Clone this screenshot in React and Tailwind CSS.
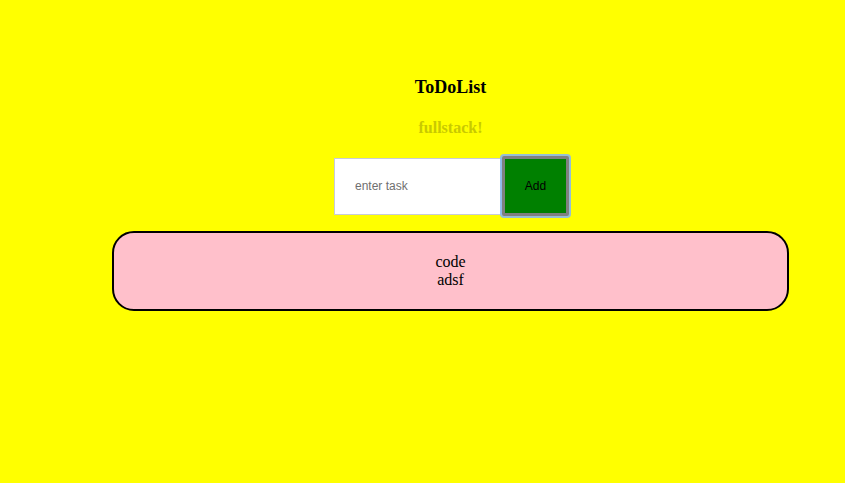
import React from 'react';

const App = () => {
  const todos = ['code', 'adsf'];

  return (
    <div className="w-[845px] h-[483px] bg-[#ffff00] overflow-hidden">
      <div className="ml-[56px] flex flex-col items-center pt-[76px]">
        {/* Header */}
        <h1 className="font-['Liberation_Serif',serif] font-bold text-[18px] leading-[22px] text-black">ToDoList</h1>
        <h3 className="mt-[20px] font-['Liberation_Serif',serif] font-bold text-[16px] leading-[20px] text-[#c9c900]">fullstack!</h3>

        {/* Form */}
        <div className="mt-[18px] ml-[2px] flex items-center">
          <input
            className="w-[168px] h-[57px] bg-white border border-[#c8ccd8] pl-[20px] text-[12px] font-['Liberation_Sans',sans-serif] text-black placeholder:text-[#6f6f6f] outline-none"
            placeholder="enter task"
          />
          <button className="w-[67px] h-[60px] bg-[#008000] border-[3px] border-[#808080] ring-2 ring-[#8ab8ec]/90 rounded-[2px] text-[12px] font-['Liberation_Sans',sans-serif] text-black">
            Add
          </button>
        </div>

        {/* List */}
        <div className="mt-[15px] w-[677px] h-[80px] bg-[#ffc0cb] border-2 border-black rounded-[22px] flex flex-col items-center justify-center font-['Liberation_Serif',serif] text-[16px] leading-[18px] text-black">
          {todos.map((t) => (
            <div key={t}>{t}</div>
          ))}
        </div>
      </div>
    </div>
  );
};

export default App;
